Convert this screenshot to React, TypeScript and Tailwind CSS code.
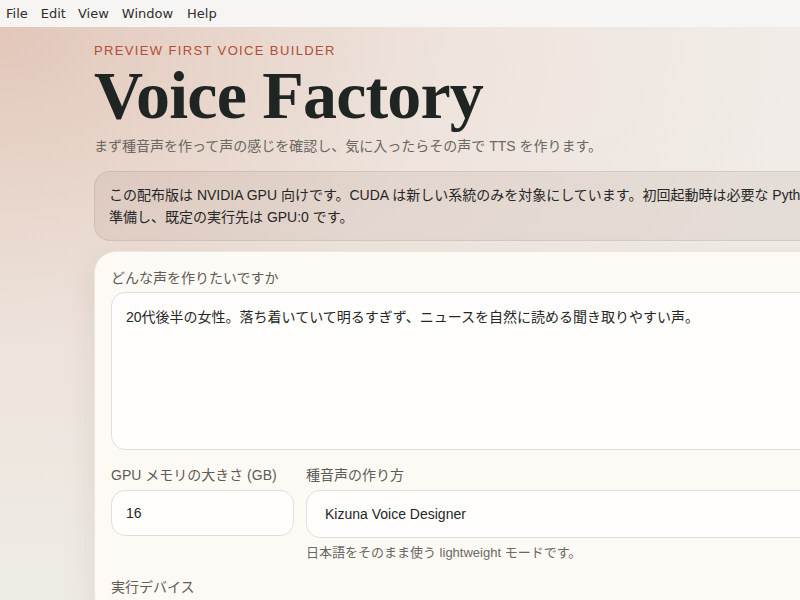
import React from "react";

export default function App() {
  const sans = "font-['Liberation_Sans','Noto_Sans_CJK_JP',sans-serif]";
  return (
    <div className={`w-[800px] h-[600px] overflow-hidden flex flex-col ${sans}`}>
      <div className="h-[27px] shrink-0 bg-[#f6f5f3] flex items-center text-[13px] text-[#2e2e2e] font-['DejaVu_Sans',sans-serif]">
        <span className="pl-[6px] pr-[7px]">File</span>
        <span className="px-[6px]">Edit</span>
        <span className="px-[6px]">View</span>
        <span className="pl-[7px] pr-[8px]">Window</span>
        <span className="px-[6px]">Help</span>
      </div>
      <div className="flex-1 overflow-hidden bg-[radial-gradient(ellipse_at_0%_0%,rgba(214,168,148,0.55)_0%,rgba(230,205,190,0.25)_40%,transparent_70%),linear-gradient(180deg,#f1ece7_0%,#eeebe5_100%)] pl-[94px] pt-[18px]">
        <div className="w-[920px] flex flex-col">
          <div className="text-[13px] leading-[12px] tracking-[0.105em] text-[#b24d39]">PREVIEW FIRST VOICE BUILDER</div>
          <h1 className="mt-[4px] font-['Liberation_Serif',serif] font-bold text-[68px] leading-[68px] tracking-[-0.012em] text-[#1e2522]">
            Voice Factory
          </h1>
          <p className="mt-[7px] text-[14px] leading-[20px] text-[#6b6762]">
            まず種音声を作って声の感じを確認し、気に入ったらその声で TTS を作ります。
          </p>
          <div className="mt-[15px] rounded-[16px] border border-[rgba(120,100,85,0.14)] bg-[rgba(170,150,135,0.17)] px-[14px] py-[12px] text-[14px] leading-[22px] text-[#262626]">
            この配布版は NVIDIA GPU 向けです。CUDA は新しい系統のみを対象にしています。初回起動時は必要な Python 環境を自動で
            <br />
            準備し、既定の実行先は GPU:0 です。
          </div>
          <div className="mt-[10px] rounded-[22px] border border-[#ece6dd] bg-[#fdfaf5] px-[16px] pt-[16px] pb-[20px] shadow-[0_12px_32px_rgba(90,60,40,0.10)]">
            <div className="text-[14px] leading-[20px] text-[#5f5b56]">どんな声を作りたいですか</div>
            <div className="mt-[4px] h-[158px] rounded-[14px] border border-[#e2dfda] bg-[#fffefc] px-[14px] py-[14px] text-[14px] leading-[20px] text-[#262626]">
              20代後半の女性。落ち着いていて明るすぎず、ニュースを自然に読める聞き取りやすい声。
            </div>
            <div className="mt-[15px] grid grid-cols-[183px_1fr] gap-x-[12px]">
              <div className="flex flex-col">
                <div className="text-[14px] leading-[20px] text-[#5f5b56]">GPU メモリの大きさ (GB)</div>
                <div className="mt-[5px] h-[46px] rounded-[14px] border border-[#e2dfda] bg-[#fffefc] px-[14px] flex items-center text-[14px] text-[#262626]">
                  16
                </div>
              </div>
              <div className="flex flex-col">
                <div className="text-[14px] leading-[20px] text-[#5f5b56]">種音声の作り方</div>
                <div className="mt-[5px] h-[48px] rounded-[14px] border border-[#e2dfda] bg-[#fffefc] px-[18px] flex items-center text-[14px] text-[#262626]">
                  Kizuna Voice Designer
                </div>
                <div className="mt-[6px] text-[13px] leading-[18px] text-[#6b6762]">
                  日本語をそのまま使う lightweight モードです。
                </div>
              </div>
            </div>
            <div className="mt-[15px] text-[14px] leading-[20px] text-[#5f5b56]">実行デバイス</div>
          </div>
        </div>
      </div>
    </div>
  );
}
